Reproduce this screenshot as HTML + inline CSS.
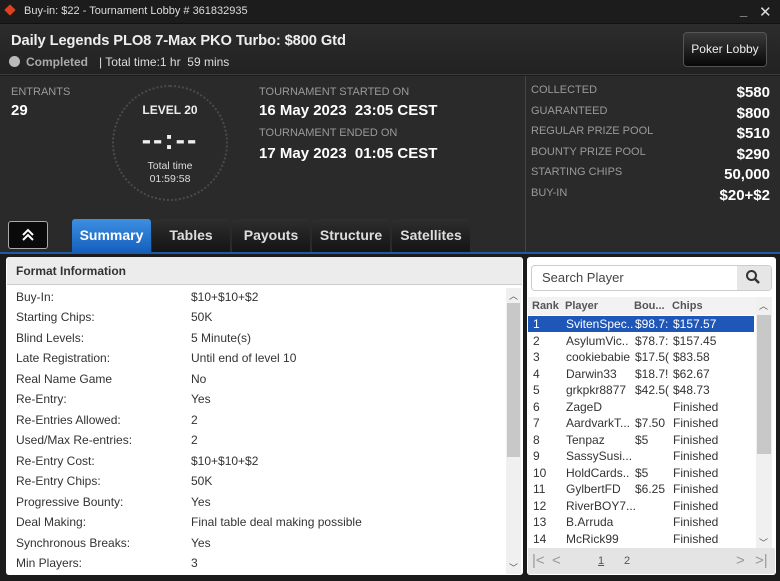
<!DOCTYPE html>
<html><head><meta charset="utf-8"><style>
*{margin:0;padding:0;box-sizing:border-box}
body{width:780px;height:581px;background:#1b1b1b;font-family:"Liberation Sans",sans-serif;position:relative;overflow:hidden;color:#fff}
.a{position:absolute}
.lbl{color:#9a9a9a;font-size:11px}
.val{font-weight:bold;font-size:15px;color:#fff}
.tab{position:absolute;top:219px;height:33px;background:linear-gradient(#2e2e2e,#141414);color:#ddd;font-weight:bold;font-size:14px;text-align:center;line-height:33px;border-radius:3px 3px 0 0}
.fr{position:absolute;left:16px;font-size:12px;color:#333}
.fv{position:absolute;left:191px;font-size:12px;color:#333}
.pr{position:absolute;left:529px;width:226px;height:16.5px;font-size:12px;color:#333;line-height:16px}
.pr span{position:absolute}
</style></head><body>
<div class="a" style="left:0;top:0;width:780px;height:24px;background:#1c1c1c;border-bottom:1px solid #111"></div>
<div class="a" style="left:6px;top:6px;width:8px;height:8px;background:#e0401c;transform:rotate(45deg)"></div>
<div class="a" style="left:24px;top:5px;font-size:11px;color:#ddd">Buy-in: $22 - Tournament Lobby # 361832935</div>
<div class="a" style="left:740px;top:3px;font-size:13px;color:#ddd;font-weight:bold">_</div>
<div class="a" style="left:759px;top:3px;font-size:15px;color:#ddd">✕</div>
<div class="a" style="left:0;top:24px;width:780px;height:51px;background:linear-gradient(#2c2c2c,#222);border-bottom:1px solid #3a3a3a"></div>
<div class="a" style="left:11px;top:33px;font-size:14.7px;font-weight:bold;color:#eee;letter-spacing:-0.1px">Daily Legends PLO8 7-Max PKO Turbo: $800 Gtd</div>
<div class="a" style="left:9px;top:56px;width:11px;height:11px;border-radius:50%;background:#bbb"></div>
<div class="a" style="left:26px;top:55px;font-size:12px;font-weight:bold;color:#aaa">Completed</div>
<div class="a" style="left:99px;top:55px;font-size:12px;color:#ddd">| Total time:1 hr&nbsp; 59 mins</div>
<div class="a" style="left:683px;top:32px;width:84px;height:35px;border-radius:4px;background:linear-gradient(#3a3a3a,#080808);border:1px solid #555;font-size:12px;color:#eee;text-align:center;line-height:33px">Poker Lobby</div>

<div class="a" style="left:0;top:76px;width:525px;height:177px;background:#2a2a2a"></div>
<div class="a" style="left:525px;top:76px;width:255px;height:177px;background:#2a2a2a;border-left:1px solid #444"></div>
<div class="a lbl" style="left:11px;top:86px">ENTRANTS</div>
<div class="a val" style="left:11px;top:102px">29</div>
<div class="a" style="left:112px;top:85px;width:116px;height:116px;border-radius:50%;border:2px dotted #4a4a4a"></div>
<div class="a" style="left:112px;top:103px;width:116px;text-align:center;font-size:12px;font-weight:bold;color:#eee">LEVEL 20</div>
<div class="a" style="left:112px;top:124px;width:116px;text-align:center;font-size:28px;font-weight:bold;color:#eee;letter-spacing:2px">--:--</div>
<div class="a" style="left:112px;top:160px;width:116px;text-align:center;font-size:10.5px;color:#ddd;line-height:13px">Total time<br>01:59:58</div>
<div class="a lbl" style="left:259px;top:86px">TOURNAMENT STARTED ON</div>
<div class="a val" style="left:259px;top:102px">16 May 2023&nbsp; 23:05 CEST</div>
<div class="a lbl" style="left:259px;top:127px">TOURNAMENT ENDED ON</div>
<div class="a val" style="left:259px;top:145px">17 May 2023&nbsp; 01:05 CEST</div>

<div class="a lbl" style="left:531px;top:84px">COLLECTED</div><div class="a val" style="right:10px;top:84px">$580</div>
<div class="a lbl" style="left:531px;top:105px">GUARANTEED</div><div class="a val" style="right:10px;top:105px">$800</div>
<div class="a lbl" style="left:531px;top:125px">REGULAR PRIZE POOL</div><div class="a val" style="right:10px;top:125px">$510</div>
<div class="a lbl" style="left:531px;top:146px">BOUNTY PRIZE POOL</div><div class="a val" style="right:10px;top:146px">$290</div>
<div class="a lbl" style="left:531px;top:166px">STARTING CHIPS</div><div class="a val" style="right:10px;top:166px">50,000</div>
<div class="a lbl" style="left:531px;top:187px">BUY-IN</div><div class="a val" style="right:10px;top:187px">$20+$2</div>

<div class="a" style="left:8px;top:221px;width:40px;height:28px;border:1px solid #aaa;border-radius:3px;background:#0a0a0a"></div>
<svg class="a" style="left:20px;top:227px" width="16" height="16" viewBox="0 0 16 16"><path d="M3 8L8 3L13 8M3 13L8 8L13 13" fill="none" stroke="#fff" stroke-width="2"/></svg>
<div class="tab" style="left:72px;width:79px;background:linear-gradient(#3d8fe0,#1560c0);color:#fff">Summary</div>
<div class="tab" style="left:152px;width:78px">Tables</div>
<div class="tab" style="left:232px;width:78px">Payouts</div>
<div class="tab" style="left:312px;width:78px">Structure</div>
<div class="tab" style="left:392px;width:78px">Satellites</div>
<div class="a" style="left:0;top:252px;width:780px;height:2px;background:#1f5aa8"></div>

<div class="a" style="left:6px;top:257px;width:517px;height:318px;background:#fff;border-radius:3px"></div>
<div class="a" style="left:7px;top:257px;width:515px;height:28px;background:#ececec;border-bottom:1px solid #ccc;border-radius:3px 3px 0 0"></div>
<div class="a" style="left:16px;top:264px;font-size:12px;font-weight:bold;color:#333">Format Information</div>
<div class="a" style="left:506px;top:288px;width:15px;height:286px;background:#f0f0f0"></div>
<div class="a" style="left:507px;top:303px;width:13px;height:154px;background:#c8c8c8"></div>
<div class="a" style="left:509px;top:289px;font-size:9px;color:#555">︿</div>
<div class="a" style="left:509px;top:561px;font-size:9px;color:#555">﹀</div>
<div class="fr" style="top:290px">Buy-In:</div><div class="fv" style="top:290px">$10+$10+$2</div>
<div class="fr" style="top:310px">Starting Chips:</div><div class="fv" style="top:310px">50K</div>
<div class="fr" style="top:331px">Blind Levels:</div><div class="fv" style="top:331px">5 Minute(s)</div>
<div class="fr" style="top:351px">Late Registration:</div><div class="fv" style="top:351px">Until end of level 10</div>
<div class="fr" style="top:372px">Real Name Game</div><div class="fv" style="top:372px">No</div>
<div class="fr" style="top:392px">Re-Entry:</div><div class="fv" style="top:392px">Yes</div>
<div class="fr" style="top:413px">Re-Entries Allowed:</div><div class="fv" style="top:413px">2</div>
<div class="fr" style="top:433px">Used/Max Re-entries:</div><div class="fv" style="top:433px">2</div>
<div class="fr" style="top:454px">Re-Entry Cost:</div><div class="fv" style="top:454px">$10+$10+$2</div>
<div class="fr" style="top:474px">Re-Entry Chips:</div><div class="fv" style="top:474px">50K</div>
<div class="fr" style="top:495px">Progressive Bounty:</div><div class="fv" style="top:495px">Yes</div>
<div class="fr" style="top:515px">Deal Making:</div><div class="fv" style="top:515px">Final table deal making possible</div>
<div class="fr" style="top:536px">Synchronous Breaks:</div><div class="fv" style="top:536px">Yes</div>
<div class="fr" style="top:556px">Min Players:</div><div class="fv" style="top:556px">3</div>

<div class="a" style="left:527px;top:257px;width:249px;height:318px;background:#fff;border-radius:3px"></div>
<div class="a" style="left:531px;top:265px;width:241px;height:26px;border:1px solid #ccc;border-radius:4px;background:#fff"></div>
<div class="a" style="left:737px;top:266px;width:34px;height:24px;background:#e6e6e6;border-radius:0 4px 4px 0"></div>
<svg class="a" style="left:745px;top:269px" width="16" height="16" viewBox="0 0 16 16"><circle cx="6.5" cy="6.5" r="4.5" fill="none" stroke="#333" stroke-width="2"/><path d="M10 10L14 14" stroke="#333" stroke-width="2.5"/></svg>
<div class="a" style="left:542px;top:270px;font-size:13px;color:#444">Search Player</div>
<div class="a" style="left:528px;top:297px;width:228px;height:18px;background:#f2f2f2;font-size:11px;font-weight:bold;color:#555;line-height:18px">
<span class="a" style="left:4px">Rank</span><span class="a" style="left:37px">Player</span><span class="a" style="left:106px">Bou...</span><span class="a" style="left:144px">Chips</span></div>
<div class="a" style="left:756px;top:297px;width:16px;height:251px;background:#f0f0f0"></div>
<div class="a" style="left:757px;top:315px;width:14px;height:139px;background:#c8c8c8"></div>
<div class="a" style="left:759px;top:299px;font-size:9px;color:#555">︿</div>
<div class="a" style="left:759px;top:536px;font-size:9px;color:#555">﹀</div>
<div class="a" style="left:528px;top:316px;width:226px;height:16px;background:#1f57b8"></div>
<div class="pr" style="top:316px;color:#fff"><span style="left:4px">1</span><span style="left:37px">SvitenSpec..</span><span style="left:106px">$98.7:</span><span style="left:144px">$157.57</span></div>
<div class="pr" style="top:332.5px"><span style="left:4px">2</span><span style="left:37px">AsylumVic..</span><span style="left:106px">$78.7:</span><span style="left:144px">$157.45</span></div>
<div class="pr" style="top:349px"><span style="left:4px">3</span><span style="left:37px">cookiebabie</span><span style="left:106px">$17.5(</span><span style="left:144px">$83.58</span></div>
<div class="pr" style="top:365.5px"><span style="left:4px">4</span><span style="left:37px">Darwin33</span><span style="left:106px">$18.7!</span><span style="left:144px">$62.67</span></div>
<div class="pr" style="top:382px"><span style="left:4px">5</span><span style="left:37px">grkpkr8877</span><span style="left:106px">$42.5(</span><span style="left:144px">$48.73</span></div>
<div class="pr" style="top:398.5px"><span style="left:4px">6</span><span style="left:37px">ZageD</span><span style="left:144px">Finished</span></div>
<div class="pr" style="top:415px"><span style="left:4px">7</span><span style="left:37px">AardvarkT...</span><span style="left:106px">$7.50</span><span style="left:144px">Finished</span></div>
<div class="pr" style="top:431.5px"><span style="left:4px">8</span><span style="left:37px">Tenpaz</span><span style="left:106px">$5</span><span style="left:144px">Finished</span></div>
<div class="pr" style="top:448px"><span style="left:4px">9</span><span style="left:37px">SassySusi...</span><span style="left:144px">Finished</span></div>
<div class="pr" style="top:464.5px"><span style="left:4px">10</span><span style="left:37px">HoldCards..</span><span style="left:106px">$5</span><span style="left:144px">Finished</span></div>
<div class="pr" style="top:481px"><span style="left:4px">11</span><span style="left:37px">GylbertFD</span><span style="left:106px">$6.25</span><span style="left:144px">Finished</span></div>
<div class="pr" style="top:497.5px"><span style="left:4px">12</span><span style="left:37px">RiverBOY7...</span><span style="left:144px">Finished</span></div>
<div class="pr" style="top:514px"><span style="left:4px">13</span><span style="left:37px">B.Arruda</span><span style="left:144px">Finished</span></div>
<div class="pr" style="top:530.5px"><span style="left:4px">14</span><span style="left:37px">McRick99</span><span style="left:144px">Finished</span></div>
<div class="a" style="left:528px;top:548px;width:247px;height:26px;background:#e4e4e4;font-size:15px;color:#999;line-height:26px">
<span class="a" style="left:4px">|&lt;</span><span class="a" style="left:24px">&lt;</span><span class="a" style="left:70px;font-size:11px;color:#555;text-decoration:underline">1</span><span class="a" style="left:96px;font-size:11px;color:#555">2</span><span class="a" style="left:208px">&gt;</span><span class="a" style="left:227px">&gt;|</span></div>
</body></html>
